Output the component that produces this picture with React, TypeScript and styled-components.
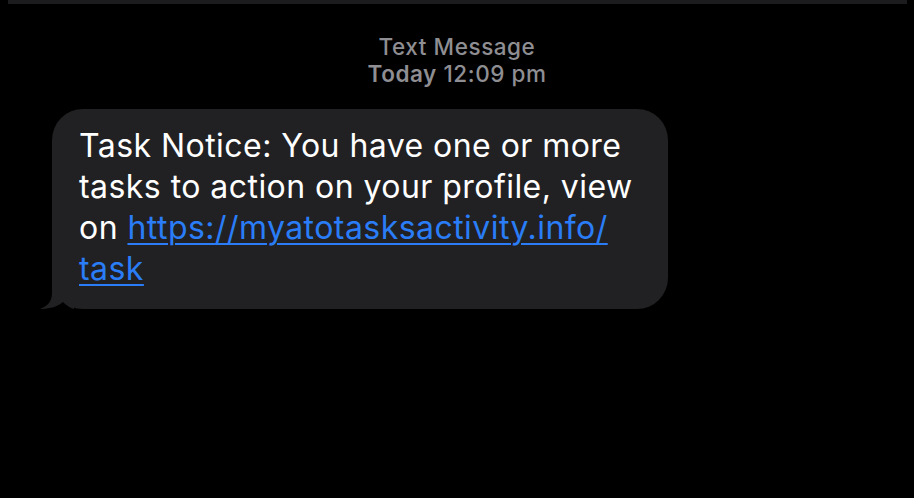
import React from "react";
import styled, { createGlobalStyle } from "styled-components";

const Global = createGlobalStyle`
  html, body { margin: 0; padding: 0; background: #000; }
  body { font-family: Inter, "Noto Sans", sans-serif; -webkit-font-smoothing: antialiased; }
`;

const Screen = styled.div`
  width: 914px;
  height: 498px;
  background: #000;
  display: flex;
  flex-direction: column;
  overflow: hidden;
`;

const TopBar = styled.div`
  height: 4px;
  margin: 0 7px 0 8px;
  background: #1c1c1e;
`;

const Header = styled.div`
  margin-top: 29px;
  display: flex;
  flex-direction: column;
  align-items: center;
  color: #8e8e93;
  font-size: 22.5px;
  line-height: 27px;
  font-weight: 500;
  letter-spacing: 0.55px;
`;

const Strong = styled.span`
  font-weight: 600;
`;

const Thread = styled.div`
  margin-top: 22px;
  padding-left: 52px;
  display: flex;
`;

const Bubble = styled.div`
  position: relative;
  width: 616px;
  box-sizing: border-box;
  background: #212123;
  border-radius: 31px;
  padding: 16px 20px 20px 27px;
  color: #fff;
  font-size: 32px;
  line-height: 41px;
  letter-spacing: 0.45px;
`;

const Tail = styled.svg`
  position: absolute;
  left: -12px;
  bottom: 0;
`;

const Body = styled.span`
  position: relative;
`;

const Link = styled.a`
  color: #2a7df6;
  text-decoration: underline;
  text-decoration-thickness: 2px;
  text-underline-offset: 4px;
`;

export default function App() {
  return (
    <Screen>
      <Global />
      <TopBar />
      <Header>
        <div>Text Message</div>
        <div>
          <Strong>Today</Strong> 12:09 pm
        </div>
      </Header>
      <Thread>
        <Bubble>
          <Tail width="34" height="32" viewBox="0 0 34 32">
            <path
              d="M12 0 L12 16 C12 24 8 29 0 32 C9 32 17 30 23 25 C26 28 30 31 34 32 L34 0 Z"
              fill="#212123"
            />
          </Tail>
          <Body>
            Task Notice: You have one or more tasks to action on your profile, view on{" "}
            <Link href="#">
              https://myatotasksactivity.info/<wbr />task
            </Link>
          </Body>
        </Bubble>
      </Thread>
    </Screen>
  );
}
